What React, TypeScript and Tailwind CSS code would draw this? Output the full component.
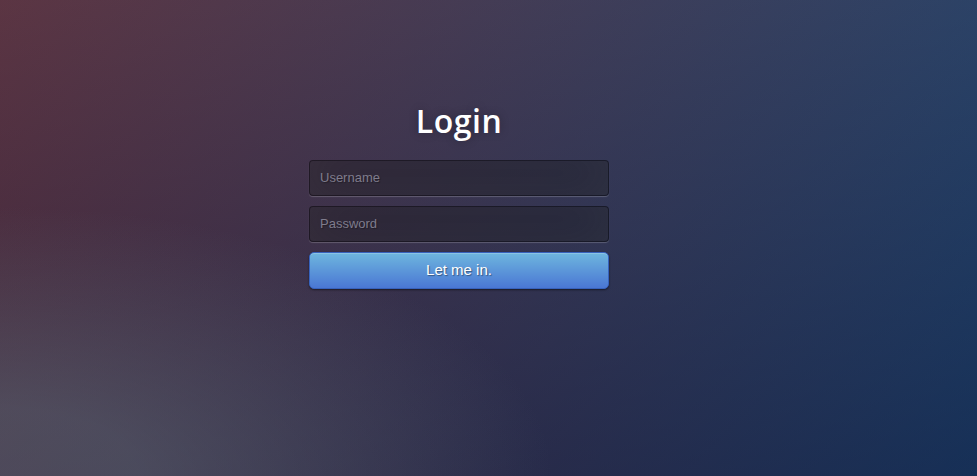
import { useState } from "react";

export default function App() {
  const [username, setUsername] = useState("");
  const [password, setPassword] = useState("");

  const inputClass =
    "block w-full h-[36px] rounded-[4px] border border-black/30 bg-black/30 px-[10px] pb-[2px] text-[13px] text-white outline-none font-['Liberation_Sans',Arial,sans-serif] [text-shadow:1px_1px_1px_rgba(0,0,0,0.3)] shadow-[inset_0_-5px_45px_rgba(100,100,100,0.2),0_1px_1px_rgba(255,255,255,0.2)] placeholder:text-[#7f7c8c]";

  return (
    <div className="h-screen w-full overflow-hidden bg-[#092756] bg-[image:radial-gradient(farthest-corner_at_0%_100%,rgba(104,128,138,.4)_10%,rgba(138,114,76,0)_40%),linear-gradient(to_bottom,rgba(57,173,219,.25)_0%,rgba(42,60,87,.4)_100%),linear-gradient(135deg,#670d10_0%,#092756_100%)]">
      <div className="pl-[309px] pt-[101px]">
        <div className="w-[300px]">
          {/* Title */}
          <h1 className="mb-[19px] h-[40px] text-center text-[32px] leading-[40px] font-semibold tracking-[0.5px] text-white font-['Open_Sans',sans-serif] [text-shadow:0_0_10px_rgba(0,0,0,0.3)]">
            Login
          </h1>

          <form onSubmit={(e) => e.preventDefault()}>
            <input
              type="text"
              placeholder="Username"
              className={inputClass}
              value={username}
              onChange={(e) => setUsername(e.target.value)}
            />
            <input
              type="password"
              placeholder="Password"
              className={inputClass + " mt-[10px]"}
              value={password}
              onChange={(e) => setPassword(e.target.value)}
            />
            <button
              type="submit"
              className="mt-[10px] block h-[37px] w-full rounded-[5px] border border-[#3762bc] bg-[#4a77d4] bg-[image:linear-gradient(to_bottom,#6eb6de,#4a77d4)] text-[15px] text-white font-['Liberation_Sans',Arial,sans-serif] [text-shadow:1px_1px_1px_rgba(0,0,0,0.4)] shadow-[inset_0_1px_0_rgba(255,255,255,0.2),0_1px_2px_rgba(0,0,0,0.5)]"
            >
              Let me in.
            </button>
          </form>
        </div>
      </div>
    </div>
  );
}
